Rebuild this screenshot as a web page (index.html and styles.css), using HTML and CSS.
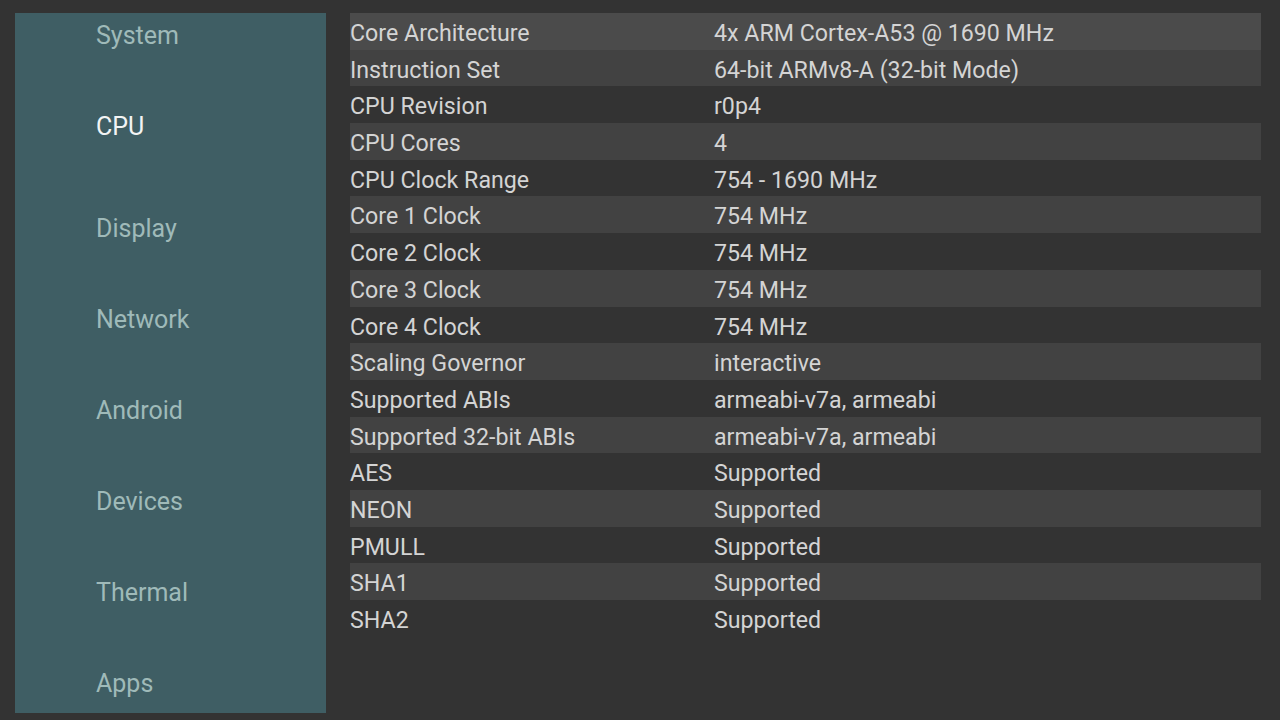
FILE: index.html
```html
<!DOCTYPE html>
<html>
<head>
<meta charset="utf-8">
<link rel="stylesheet" href="styles.css">
</head>
<body>
<div class="screen">
  <nav class="sidebar">
    <ul class="menu">
      <li class="item">System</li>
      <li class="item active">CPU</li>
      <li class="item">Display</li>
      <li class="item">Network</li>
      <li class="item">Android</li>
      <li class="item">Devices</li>
      <li class="item">Thermal</li>
      <li class="item">Apps</li>
    </ul>
  </nav>
  <main class="table">
    <div class="row focused"><span class="label">Core Architecture</span><span class="value">4x ARM Cortex-A53 @ 1690 MHz</span></div>
    <div class="row shaded"><span class="label">Instruction Set</span><span class="value">64-bit ARMv8-A (32-bit Mode)</span></div>
    <div class="row"><span class="label">CPU Revision</span><span class="value">r0p4</span></div>
    <div class="row shaded"><span class="label">CPU Cores</span><span class="value">4</span></div>
    <div class="row"><span class="label">CPU Clock Range</span><span class="value">754 - 1690 MHz</span></div>
    <div class="row shaded"><span class="label">Core 1 Clock</span><span class="value">754 MHz</span></div>
    <div class="row"><span class="label">Core 2 Clock</span><span class="value">754 MHz</span></div>
    <div class="row shaded"><span class="label">Core 3 Clock</span><span class="value">754 MHz</span></div>
    <div class="row"><span class="label">Core 4 Clock</span><span class="value">754 MHz</span></div>
    <div class="row shaded"><span class="label">Scaling Governor</span><span class="value">interactive</span></div>
    <div class="row"><span class="label">Supported ABIs</span><span class="value">armeabi-v7a, armeabi</span></div>
    <div class="row shaded"><span class="label">Supported 32-bit ABIs</span><span class="value">armeabi-v7a, armeabi</span></div>
    <div class="row"><span class="label">AES</span><span class="value">Supported</span></div>
    <div class="row shaded"><span class="label">NEON</span><span class="value">Supported</span></div>
    <div class="row"><span class="label">PMULL</span><span class="value">Supported</span></div>
    <div class="row shaded"><span class="label">SHA1</span><span class="value">Supported</span></div>
    <div class="row"><span class="label">SHA2</span><span class="value">Supported</span></div>
  </main>
</div>
</body>
</html>
```

FILE: styles.css
```css
html, body {
  margin: 0;
  padding: 0;
  background: #333333;
  width: 1280px;
  height: 720px;
  overflow: hidden;
  font-family: Roboto, "Noto Sans", sans-serif;
}

.screen {
  display: flex;
  align-items: flex-start;
  padding: 13px 0 0 15px;
  gap: 24px;
}

.sidebar {
  width: 311px;
  height: 700px;
  background: #3f5e64;
  overflow: hidden;
  flex-shrink: 0;
}

.menu {
  list-style: none;
  margin: -23.5px 0 0 0;
  padding: 0 0 0 81px;
}

.item {
  height: 91px;
  line-height: 91px;
  font-size: 25px;
  color: #9fbab9;
}

.item.active {
  color: #f2f4f4;
  margin-bottom: 11px;
}

.table {
  width: 911px;
  display: flex;
  flex-direction: column;
}

.row {
  display: grid;
  grid-template-columns: 364px 1fr;
  height: 36.7px;
  line-height: 40px;
  font-size: 23.2px;
  color: #d4d4d4;
  white-space: nowrap;
}

.row.shaded {
  background: #424242;
}

.row.focused {
  background: #4b4b4b;
}
```
